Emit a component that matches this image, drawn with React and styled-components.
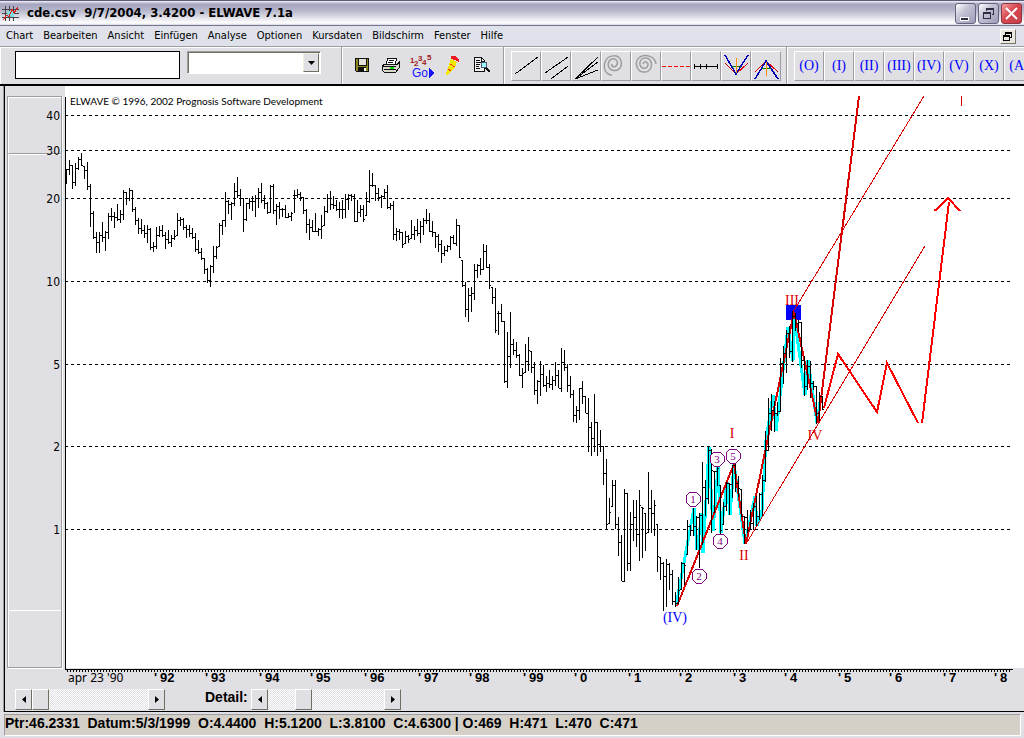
import React, { useState } from 'react';
import styled, { createGlobalStyle, css } from 'styled-components';

const face = '#e0dfe3';
const shadow = '#9d9da1';
const blue = '#0000ff';
const waveRed = '#d80000';

const GlobalStyle = createGlobalStyle`
        * { box-sizing: border-box; }
        body {
            margin: 0;
            background: ${face};
            font-family: "DejaVu Sans Condensed", "Noto Sans", sans-serif;
            font-size: 11px;
            color: #000;
        }
        button, input, select { font: inherit; color: inherit; margin: 0; padding: 0; border-radius: 0; }
     `;

const Window = styled.div`
        display: flex;
        flex-direction: column;
        min-height: 100vh;
        overflow: hidden;
        background: ${face};
     `;

const TitleBar = styled.header`
        display: flex;
        align-items: center;
        height: 26px;
        padding: 0 2px;
        border-top: 1px solid #5d5d7b;
        border-bottom: 1px solid #76768f;
        background: linear-gradient(#f4f4fa 0, #a5a5c0 3px, #b4b4ca 9px, #e2e2ea 17px, #fff 22px, #d5d5e0 24px);
     `;

const Title = styled.h1`
        flex: 1;
        margin: 0;
        padding-left: 8px;
        font-family: "DejaVu Sans Condensed", "Noto Sans", sans-serif;
        font-size: 13px;
        line-height: 20px;
        font-weight: bold;
        white-space: pre;
     `;

const WindowButtons = styled.div`
        display: flex;
        gap: 2px;
     `;

const WindowButton = styled.button`
        display: flex;
        width: 21px;
        height: 21px;
        border: 1px solid ${p => (p.$close ? '#8d3543' : '#63637f')};
        border-radius: 3px;
        background: ${p => (p.$close
            ? 'linear-gradient(135deg, #f0a0a0, #d9474f 45%, #c63f47)'
            : 'linear-gradient(135deg, #fff, #c3c3d4 40%, #9c9cb8)')};
     `;

const MenuBar = styled.nav`
        display: flex;
        align-items: center;
        gap: 10px;
        height: 20px;
        padding: 0 8px 0 6px;
        background: #dfe2ea;
     `;

const MenuItem = styled.button`
        border: 0;
        background: none;
        line-height: 18px;
     `;

const ChildRestore = styled.button`
        display: flex;
        width: 16px;
        height: 15px;
        margin-left: auto;
        border: 1px solid;
        border-color: #fff #77746a #77746a #fff;
        background: #e9e7df;
     `;

const ToolBar = styled.div`
        display: flex;
        height: 40px;
        border-top: 1px solid ${shadow};
        border-bottom: 2px solid #000;
        box-shadow: inset 0 1px #fff;
        overflow: hidden;
     `;

const Group = styled.div`
        display: flex;
        flex: none;
        align-items: flex-start;
        padding: ${p => p.$pad || '4px 5px 4px 7px'};
        gap: ${p => p.$gap || 0}px;
        border-right: ${p => (p.$last ? 0 : `1px solid ${shadow}`)};
        box-shadow: inset 1px 0 #fff;
     `;

const SymbolInput = styled.input`
        width: 165px;
        height: 28px;
        padding: 0 4px;
        border: 1px solid #000;
        background: #fff;
     `;

const Combo = styled.div`
        position: relative;
        width: 134px;
        height: 23px;
     `;

const ComboSelect = styled.select`
        width: 100%;
        height: 100%;
        appearance: none;
        border: 1px solid;
        border-color: ${shadow} #fff #fff ${shadow};
        box-shadow: inset 1px 1px #716f64;
        background: #fff;
     `;

const ComboArrow = styled.span`
        position: absolute;
        top: 2px;
        right: 2px;
        bottom: 2px;
        display: grid;
        place-items: center;
        width: 16px;
        border: 1px solid;
        border-color: #f1efe2 #716f64 #716f64 #f1efe2;
        background: ${face};
        pointer-events: none;
     `;

const IconButton = styled.button`
        display: flex;
        justify-content: center;
        width: 24px;
        height: 28px;
        border: 0;
        background: none;
     `;

const ToolButton = styled.button`
        display: flex;
        flex: none;
        align-items: center;
        justify-content: center;
        width: 30px;
        height: 30px;
        border: 1px solid;
        border-color: #fff ${shadow} ${shadow} #fff;
        background: ${face};
        ${p => p.$wave && css`
            color: ${blue};
            font-family: "Liberation Serif", serif;
            font-size: 14px;
        `}
     `;

const Drawing = styled.svg`
        display: block;
        flex: none;
        shape-rendering: crispEdges;
     `;

const Workspace = styled.main`
        flex: 1;
        display: flex;
        flex-direction: column;
        margin-left: 4px;
        border-left: 1px solid #000;
        border-bottom: 1px solid #000;
        box-shadow: -1px 0 ${shadow};
     `;

const ChartArea = styled.section`
        flex: 1;
        display: grid;
        grid-template: minmax(582px, 1fr) 20px / 60px 1fr;
     `;

const Rail = styled.div`
        grid-area: 1 / 1;
        display: grid;
        grid-template-rows: 57px 1fr 57px;
        margin: 10px 3px 0 2px;
        border: 1px solid ${shadow};
        box-shadow: 1px 1px #fff;
     `;

const RailPart = styled.div`
        border-top: 1px solid #fff;
        border-left: 1px solid #fff;
        border-bottom: ${p => (p.$line ? `1px solid ${shadow}` : 0)};
     `;

const Paper = styled.div`
        grid-area: 1 / 2;
        background: #fff;
     `;

const Plot = styled.svg`
        grid-area: 1 / 1 / 3 / 3;
        width: 100%;
        height: 100%;
        text-rendering: optimizeSpeed;
     `;

const Controls = styled.div`
        display: flex;
        align-items: flex-start;
        height: 23px;
        padding-left: 10px;
        padding-top: 1px;
     `;

const ScrollBar = styled.div`
        display: flex;
        width: 150px;
        height: 21px;
     `;

const raised = css`
        border: 1px solid;
        border-color: #fff #716f64 #716f64 #fff;
        border-radius: 0;
        background: ${face};
     `;

const ScrollArrow = styled.button`
        display: grid;
        place-items: center;
        width: 17px;
        height: 21px;
        ${raised}
     `;

const ScrollTrack = styled.input`
        flex: 1;
        min-width: 0;
        height: 21px;
        appearance: none;
        background: repeating-conic-gradient(#fff 0 25%, ${face} 0 50%) 0 0 / 2px 2px;
        &::-webkit-slider-thumb {
            appearance: none;
            width: 17px;
            height: 21px;
            ${raised}
        }
     `;

const DetailLabel = styled.label`
        width: 46px;
        margin-left: 40px;
        font: bold 14px/17px "Liberation Sans", sans-serif;
     `;

const StatusBar = styled.footer`
        height: 26px;
        padding: 2px 3px 2px 4px;
     `;

const StatusText = styled.div`
        height: 22px;
        border: 1px solid;
        border-color: ${shadow} #fff #fff ${shadow};
        background: #d4d0c8;
        font: bold 14px/16px "Liberation Sans", sans-serif;
        white-space: pre;
     `;

const menus = ['Chart', 'Bearbeiten', 'Ansicht', 'Einfügen', 'Analyse', 'Optionen', 'Kursdaten', 'Bildschirm', 'Fenster', 'Hilfe'];

const waves = ['(O)', '(I)', '(II)', '(III)', '(IV)', '(V)', '(X)', '(A)'];

const fileTools = [
    {
        name: 'Save', art: <>
            <path d="M5 7h14v14h-13l-1-1z" fill="#111" />
            <path d="M6 8h2v7h9v-7h1v12h-2v-4h-8v4h-2z" fill="#8a8a1c" />
            <path d="M9 8h7v6h-7z" fill="#e4e4dc" />
            <path d="M14 17h2v3h-2z" fill="#fff" />
        </>
    },
    {
        name: 'Print', art: <>
            <path d="M8 7h9l-2 6h-9z" fill="#fff" stroke="#111" />
            <path d="M9 9h5M8 11h5" stroke="#111" />
            <path d="M5 13h12l2-2v6l-3 4h-12l-2-2v-4z" fill="#d8d8cc" stroke="#111" />
            <path d="M3 15h13M4 18h12M16 14l3-2" stroke="#111" />
            <path d="M10 16.500h4" stroke="#00e000" strokeWidth="2" />
        </>
    },
    {
        name: 'Analyse', art: <>
            <g fontFamily="Liberation Sans" fontSize="8" fontWeight="bold" fill="#a01818">
                <text x="0" y="12">1</text>
                <text x="4" y="15">2</text>
                <text x="8" y="10">3</text>
                <text x="12" y="14">4</text>
                <text x="17" y="9">5</text>
            </g>
            <text x="2" y="26" fontFamily="Liberation Sans" fontSize="12" fill="#1414ff">Go</text>
            <path d="M19 17v10l5-5z" fill="#1414ff" />
        </>
    },
    {
        name: 'Highlight', art: <>
            <path d="M11 8l6 3-2 5-7 8h-2l1-5z" fill="#f0e800" />
            <path d="M11 5h4l4 3v4l-2-2-6-2z" fill="#f01818" />
            <path d="M10 13l5 3M8 18l3 2" stroke="#f04000" />
        </>
    },
    {
        name: 'Preview', art: <>
            <path d="M4.500 6.500h7l3 3v11h-10z" fill="#eee" stroke="#111" />
            <path d="M6 9.500h4M6 11.500h5M6 13.500h4M6 15.500h3M6 17.500h4M11.500 7v3h3" stroke="#111" fill="none" />
            <circle cx="14" cy="14" r="3" fill="#9ff" stroke="#557" />
            <path d="M16 17l4 4" stroke="#111" strokeWidth="2" />
        </>
    },
];

const Spiral = ({ d }) => <path d={d} stroke={shadow} strokeWidth="1.500" shapeRendering="auto" />;

const drawTools = [
    { name: 'Trend line', art: <path d="M3 22L26 5" /> },
    { name: 'Parallel lines', art: <path d="M3 21L26 5M9 27L26 14" /> },
    { name: 'Fan', art: <path d="M3 27L26 5M3 27L26 10M3 27L26 18" /> },
    { name: 'Spiral out', art: <Spiral d="M10 23C4 23 1 17 3 10C6 2 17 2 19 9C21 16 15 20 10 18C5 16 5 9 10 7C15 6 17 11 14 14C12 16 9 14 10 12" /> },
    { name: 'Spiral in', art: <Spiral d="M24 12C23 4 14 2 8 5C2 9 4 19 11 20C19 21 22 12 17 7C12 4 7 8 8 13C10 18 16 17 16 12C15 9 12 9 11 12" /> },
    { name: 'Level', art: <path d="M0 14.500H28" stroke="#ff0000" strokeDasharray="4 2" /> },
    { name: 'Ruler', art: <path d="M2 14.500H26M2.500 12v5M8.500 12v5M14.500 12v5M25.500 12v5" /> },
    {
        name: 'Target down', art: <>
            <path d="M3 11L14 22L26 11" stroke="#e00000" />
            <path d="M3 3L14 22L26 3" stroke="#0000b8" strokeWidth="1.500" />
            <path d="M10 14.500h9" stroke="#008000" />
            <path d="M14.500 6v15" stroke="#ff8c00" />
        </>
    },
    {
        name: 'Target up', art: <>
            <path d="M3 20L14 9L26 20" stroke="#e00000" />
            <path d="M3 27L14 9L26 27" stroke="#0000b8" strokeWidth="1.500" />
            <path d="M10 16.500h9" stroke="#008000" />
            <path d="M14.500 10v14" stroke="#ff8c00" />
        </>
    },
];

// Every run starts at column x and row y; its bars are high, low, close
// in thirds of a unit below y, one bar each three units.
const runs = [
    {
        x: 66, y: 140, bars: '87 133 87,60 107 75,77 147 127,71 139 85,51 90 58,39 80 75,78 119 92,66 150 139,132 263 220,213 299 291,276 339 306,276 341 285,246 307 291,275 335 277,219 299 230,204 244 228,216 266 231,192 245 238,210 251 222,150 242 158,157 197 174,145 183 151,150 218 209,201 257 240,234 284 265,237 284 270,255 296 280,255 311 267,265 332 322,306 338 318,261 329 287,258 292 272,255 292 285,276 329 297,270 314 306,285 323 296,270 302 290,219 290 240,231 260 237,235 272 263,255 296 267,255 293 280,264 297 291,279 338 327,300 344 338,324 362 354,355 402 388,385 431 421,375 443 378,318 399 349,318 359 321,250 321 256,240 287 240,156 262 183,180 224 193,187 242 189,129 200 154,111 174 165,147 200 175,175 278 238,189 243 190,175 209 183,168 214 183,166 231 175,145 206 157,129 189 180,165 207 190,186 222 217,135 220 138,132 222 210,192 255 200,187 238 207,204 233 207,195 234 231,219 234 229,217 243 220'
    },
    {
        x: 294, y: 150, bars: '120 191 135,117 145 133,127 153 143,142 193 180,177 251 222,207 272 232,210 248 243,189 247 245,234 260 237,195 269 230,168 230 185,132 189 145,123 180 163,138 178 165,150 185 177,156 206 178,150 209 178,132 206 147,132 181 135,132 154 138,132 217 215,151 217 187,165 202 178,165 217 207,126 200 153,60 159 106,69 113 105,105 153 130,114 154 142,136 174 138,117 145 127,105 177 172,160 181 165,154 272 253,234 275 243,237 272 248,246 296 283,243 284 258,255 281 268,210 269 253,228 272 240,207 259 250,213 281 229,204 256 210,177 223 212,189 248 245,213 263 247,246 296 260,252 308 284,270 341 311,288 319 300,285 307 289,259 302 261,255 284 280,207 290 226,225 325 322,330 413 406,396 503 478,415 518 435,411 488 429,342 451 360,342 386 345,324 375 358,282 360 305,285 355 351,342 419 407,411 464 441,415 551 542'
    },
    {
        x: 498, y: 280, bars: '93 167 101,72 128 124,123 311 304,156 326 229,96 266 193,177 227 210,186 236 226,222 290 286,264 326 280,192 281 244,171 275 211,213 281 262,247 345 331,300 374 304,243 350 282,255 323 315,288 338 309,270 326 312,288 332 300,247 318 287,270 326 325,204 338 247,210 275 262,252 338 316,288 356 343,330 428 406,378 429 391,324 422 326,303 374 350,348 401 400,354 518 442,426 530 475,342 518 427,426 530 493,450 518 498,498 617 580,537 748 733,654 734 697,600 683 616,600 748 733,712 830 788,765 905 904,627 906 640,640 875 850,696 875 733,660 785 712,660 803 763,630 845 676,682 836 684,699 815 760,576 761 685,630 761 700,660 770 676,732 878 830,831 902 850,846 995 888,837 983 852,850 930 883,870 977 963,936 983 970,892 973 930,847 930 850,850 917 855,720 827 740,735 770 750,684 770 740,710 810 712,699 866 705,546 795 622,600 708 655,500 672 510,508 760 570,573 700 575,540 620 565,615 762 750,668 735 680,606 695 610,610 705 612,555 656 556,552 637 610,588 652 626,627 712 710,708 792 712,690 760 750,690 752 730,670 752 680,650 742 710,640 720 642,585 710 600,453 606 510,354 513 400,342 455 392,365 458 400,368 410 394,235 398 250,200 312 220,150 281 160,140 234 215,95 248 110,100 155 130,120 158 126,126 265 240,228 348 320,240 330 260,245 355 310,303 330 318,318 433 400,338 428 350,350 392 388'
    },
];

const barPath = runs.map(run => run.bars.split(',').map((bar, i, all) => {
    const toY = v => run.y + Math.floor(v / 3);
    const [high, low, close] = bar.split(' ').map(Number);
    const prev = i ? Number(all[i - 1].split(' ')[2]) : close;
    const open = Math.min(Math.max(prev, high), low - 3);
    const x = run.x + 3 * i;
    return `M${x} ${toY(high)}h1V${toY(low)}h-1zM${x + 1} ${toY(close)}h1v1h-1zM${x - 1} ${toY(open)}h1v1h-1z`;
}).join('')).join('');

const levels = [[40, 115], [30, 150], [20, 198], [10, 281], [5, 364], [2, 446], [1, 529]];

const years = [['92', 155], ['93', 206], ['94', 260], ['95', 311], ['96', 365], ['97', 419], ['98', 470], ['99', 524], ['0', 575],
    ['1', 629], ['2', 680], ['3', 734], ['4', 785], ['5', 839], ['6', 890], ['7', 944], ['8', 995]];

const counts = [['1', 693, 499], ['2', 699, 576], ['3', 717, 459], ['4', 720, 541], ['5', 733, 456]];

const labels = [['III', 792, 305, waveRed], ['I', 732, 438, waveRed], ['II', 744, 560, waveRed], ['IV', 815, 440, waveRed], ['(IV)', 675, 622, blue]];

const Chart = () => (
    <Plot viewBox="5 86 1019 602" preserveAspectRatio="xMinYMin meet" role="img" aria-label="Elliott wave chart">
        <g shapeRendering="crispEdges" fill="none">
            {levels.map(([value, y]) => (
                <path key={value} d={`M65 ${y + 0.5}H1010`} stroke="#000" strokeDasharray="3 3" />
            ))}
            <path d="M65.500 97V669.500H1013" stroke="#000" />
            <path d="M67 671H1012" stroke="#000" strokeWidth="2" strokeDasharray="1 2" />
            <rect x="786" y="305" width="15" height="15" fill={blue} />
            <path
                d="M676 606L694 508L697 550L702 513L703 553L709 447L713 531L718 467L721 533L727 482L730 515L734 464L745 544L755 496L757 526L762 510L766 440L773 395L776 431L788 327L793 361L794 314L805 395L808 360L817 423L821 395"
                stroke="#00ffff" strokeWidth="3" strokeLinejoin="bevel"
            />
            <path d="M677 606L734 464L746 544L794 312L818 423L859 96" stroke={waveRed} strokeWidth="2" />
            <path d={barPath} fill="#000" />
            <path d="M746 544L925 246M793 312L924 96M961.500 96V106" stroke={waveRed} />
            <path d="M824 408L838 354L877 412L887 363L918 423M922 423L949 202M934 210H936L948 198L960 211" stroke="#ff0000" strokeWidth="2" />
            {counts.map(([n, x, y]) => (
                <path key={n} d={`M${x - 3} ${y - 7}h6l4 4v6l-4 4h-6l-4-4v-6z`} fill="#fff" stroke="#800080" />
            ))}
        </g>
        <g fontFamily="Liberation Serif" fontSize="11" fill="#800080" textAnchor="middle">
            {counts.map(([n, x, y]) => <text key={n} x={x} y={y + 4}>{n}</text>)}
        </g>
        <g fontFamily="Liberation Serif" fontSize="14" textAnchor="middle">
            {labels.map(([text, x, y, color]) => <text key={text} x={x} y={y} fill={color}>{text}</text>)}
        </g>
        <g fontFamily="DejaVu Sans Condensed" fontSize="12" textAnchor="end">
            {levels.map(([value, y]) => <text key={value} x="60" y={y + 5}>{value}</text>)}
        </g>
        <g fontFamily="Liberation Sans" fontSize="13" fontWeight="bold">
            {years.map(([year, x]) => (
                <g key={year}>
                    <text x={x - 1} y="682">'</text>
                    <text x={x + 5} y="682">{year}</text>
                </g>
            ))}
        </g>
        <text x="68" y="682" fontFamily="Noto Sans" fontSize="12">apr 23 '90</text>
        <text x="70" y="105" fontFamily="Lato" fontSize="10">ELWAVE © 1996, 2002 Prognosis Software Development</text>
    </Plot>
);

const Scroller = ({ id, label, start }) => {
    const [value, setValue] = useState(start);
    return (
        <ScrollBar>
            <ScrollArrow aria-label={`${label} back`} onClick={() => setValue(Math.max(0, value - 5))}>
                <svg width="4" height="7"><path d="M4 0v7L0 3.500z" /></svg>
            </ScrollArrow>
            <ScrollTrack id={id} type="range" aria-label={label} value={value} onChange={evt => setValue(Number(evt.target.value))} />
            <ScrollArrow aria-label={`${label} forward`} onClick={() => setValue(Math.min(100, value + 5))}>
                <svg width="4" height="7"><path d="M0 0v7L4 3.500z" /></svg>
            </ScrollArrow>
        </ScrollBar>
    );
};

export default () => (
    <>
        <GlobalStyle />
        <Window>
            <TitleBar>
                <Drawing width="17" height="17" fill="none">
                    <path d="M0 4.500h17M0 8.500h17M0 12.500h17M3.500 1v15M7.500 1v15M11.500 1v15" stroke="#444" />
                    <path d="M5 6h7v6h-7z" fill="#7fd8dc" />
                    <path d="M1 15l4-5 2 2 3-8 2 4 4-6" stroke="#e01818" strokeWidth="1" />
                </Drawing>
                <Title>cde.csv  9/7/2004, 3.4200 - ELWAVE 7.1a</Title>
                <WindowButtons>
                    <WindowButton aria-label="Minimize">
                        <Drawing width="19" height="19"><path d="M4 13h8v3h-8z" fill="#2c2c44" stroke="#fff" /></Drawing>
                    </WindowButton>
                    <WindowButton aria-label="Restore">
                        <Drawing width="19" height="19" fill="none" stroke="#2c2c44">
                            <path d="M7.500 7V4.500h7v6h-2M7 5.500h8M4.500 8.500h7v6h-7zM4 9.500h8" />
                        </Drawing>
                    </WindowButton>
                    <WindowButton $close aria-label="Close">
                        <svg width="19" height="19"><path d="M4 4l11 11M15 4l-11 11" stroke="#fff" strokeWidth="2" /></svg>
                    </WindowButton>
                </WindowButtons>
            </TitleBar>
            <MenuBar>
                {menus.map(name => <MenuItem key={name}>{name}</MenuItem>)}
                <ChildRestore aria-label="Restore chart">
                    <Drawing width="14" height="13" fill="none" stroke="#000">
                        <path d="M4.500 5V2.500h6v5h-2M4 3.500h7M2.500 6.500h6v4h-6zM2 5.500h7" />
                    </Drawing>
                </ChildRestore>
            </MenuBar>
            <ToolBar>
                <Group $pad="4px 20px 4px 15px" $gap={7}>
                    <SymbolInput aria-label="Symbol" />
                    <Combo>
                        <ComboSelect aria-label="Study" />
                        <ComboArrow><svg width="7" height="4"><path d="M0 0h7L3.500 4z" /></svg></ComboArrow>
                    </Combo>
                </Group>
                <Group $pad="4px 9px 2px 8px" $gap={6}>
                    {fileTools.map(tool => (
                        <IconButton key={tool.name} aria-label={tool.name}>
                            <Drawing width="24" height="28" fill="none">{tool.art}</Drawing>
                        </IconButton>
                    ))}
                </Group>
                <Group>
                    {drawTools.map(tool => (
                        <ToolButton key={tool.name} aria-label={tool.name}>
                            <Drawing width="28" height="28" fill="none" stroke="#000">{tool.art}</Drawing>
                        </ToolButton>
                    ))}
                </Group>
                <Group $last>
                    {waves.map(name => <ToolButton $wave key={name}>{name}</ToolButton>)}
                </Group>
            </ToolBar>
            <Workspace>
                <ChartArea>
                    <Rail>
                        <RailPart $line />
                        <RailPart />
                        <RailPart />
                    </Rail>
                    <Paper />
                    <Chart />
                </ChartArea>
                <Controls>
                    <Scroller id="position" label="Position" start={0} />
                    <DetailLabel htmlFor="detail">Detail:</DetailLabel>
                    <Scroller id="detail" label="Detail" start={27} />
                </Controls>
            </Workspace>
            <StatusBar>
                <StatusText>Ptr:46.2331  Datum:5/3/1999  O:4.4400  H:5.1200  L:3.8100  C:4.6300 | O:469  H:471  L:470  C:471</StatusText>
            </StatusBar>
        </Window>
    </>
);
